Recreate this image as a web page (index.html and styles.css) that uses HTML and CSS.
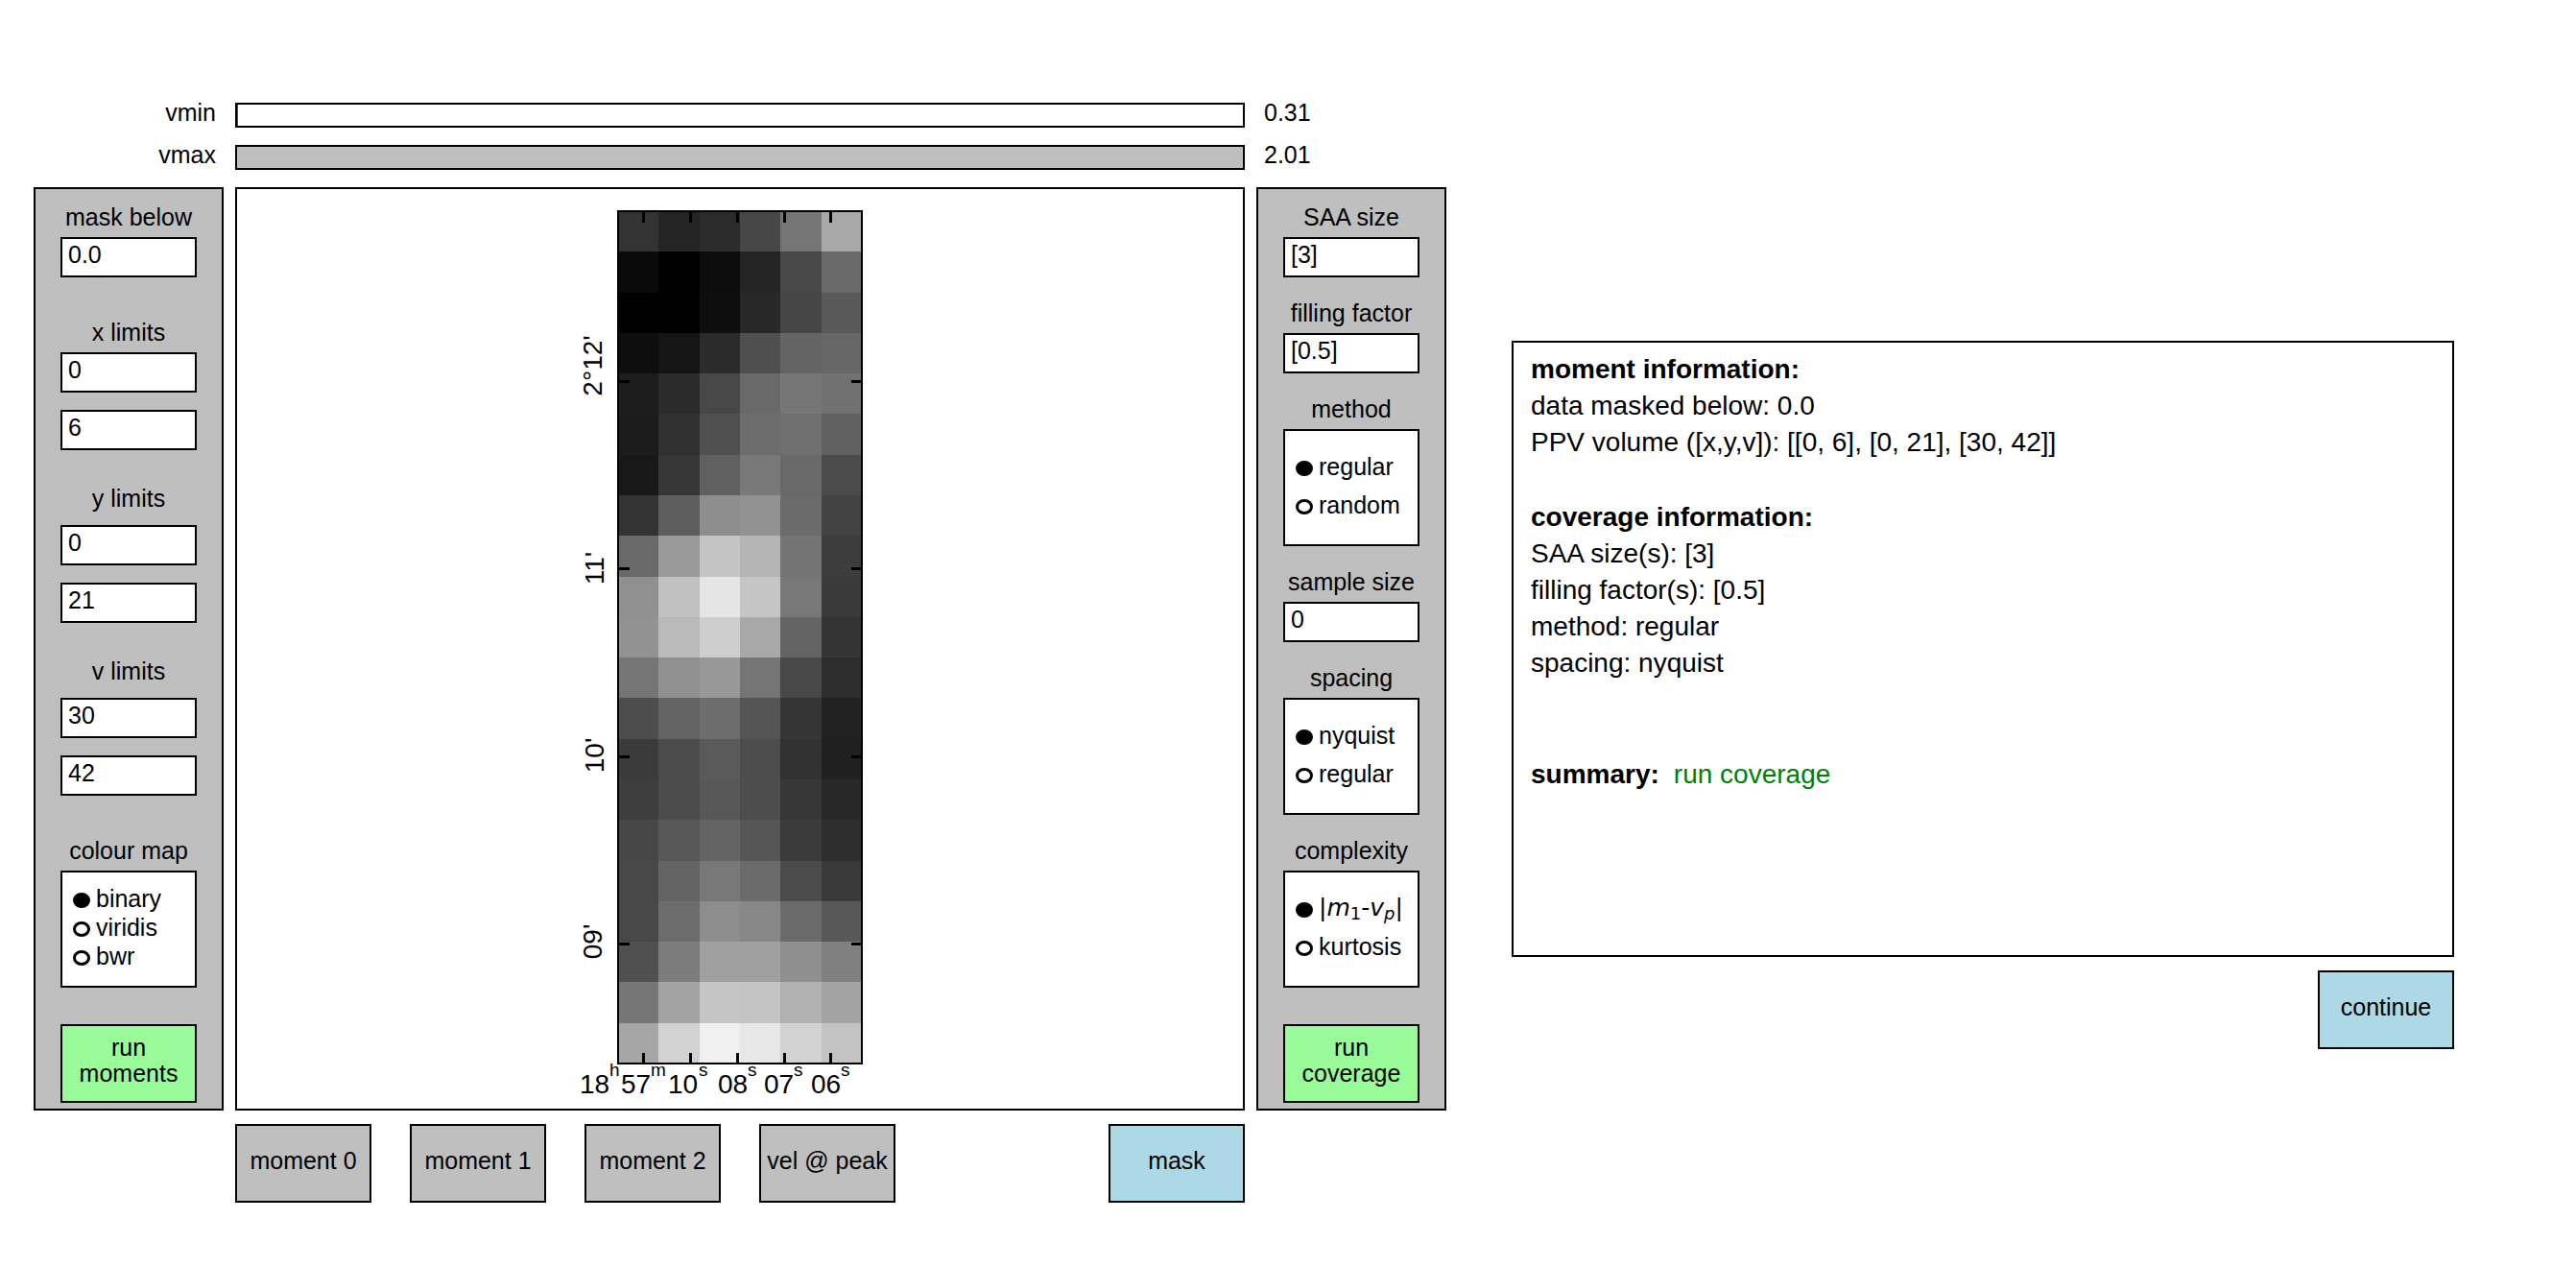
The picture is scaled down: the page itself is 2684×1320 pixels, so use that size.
FILE: index.html
```
<!DOCTYPE html>
<html lang="en">
<head>
<meta charset="utf-8">
<title>Moments and coverage</title>
<link rel="stylesheet" href="styles.css">
</head>
<body>
<main class="workspace">
  <label class="slider-label" for="vmin">vmin</label>
  <input class="slider slider-min" type="range" id="vmin" min="0.31" max="2.01" step="0.01" value="0.31">
  <output class="slider-value" for="vmin">0.31</output>

  <label class="slider-label" for="vmax">vmax</label>
  <input class="slider slider-max" type="range" id="vmax" min="0.31" max="2.01" step="0.01" value="2.01">
  <output class="slider-value" for="vmax">2.01</output>

  <form class="panel panel-moments">
    <div class="field">
      <label for="mask-below">mask below</label>
      <input class="entry" type="text" id="mask-below" value="0.0">
    </div>
    <div class="field">
      <label for="x-low">x limits</label>
      <div class="pair">
        <input class="entry" type="text" id="x-low" value="0">
        <input class="entry" type="text" aria-label="x upper limit" value="6">
      </div>
    </div>
    <div class="field field-raised">
      <label for="y-low">y limits</label>
      <div class="pair">
        <input class="entry" type="text" id="y-low" value="0">
        <input class="entry" type="text" aria-label="y upper limit" value="21">
      </div>
    </div>
    <div class="field field-raised">
      <label for="v-low">v limits</label>
      <div class="pair">
        <input class="entry" type="text" id="v-low" value="30">
        <input class="entry" type="text" aria-label="v upper limit" value="42">
      </div>
    </div>
    <div class="field">
      <span id="colour-map">colour map</span>
      <div class="choices choices-tight" role="radiogroup" aria-labelledby="colour-map">
        <label><input type="radio" name="cmap" checked><span>binary</span></label>
        <label><input type="radio" name="cmap"><span>viridis</span></label>
        <label><input type="radio" name="cmap"><span>bwr</span></label>
      </div>
    </div>
    <button class="button run" type="button">run<br>moments</button>
  </form>

  <section class="canvas">
    <svg class="plot" viewBox="0 0 400 958" role="img" aria-label="Moment map">
      <g id="pixels" shape-rendering="crispEdges"></g>
      <rect class="frame" x="73" y="23" width="254" height="888"/>
      <g id="ticks" shape-rendering="crispEdges"></g>
      <g class="axis axis-y">
        <text transform="translate(56 184) rotate(-90)">2°12'</text>
        <text transform="translate(58 395) rotate(-90)">11'</text>
        <text transform="translate(58 590) rotate(-90)">10'</text>
        <text transform="translate(56 784) rotate(-90)">09'</text>
      </g>
      <g class="axis">
        <text y="942"><tspan x="33">18</tspan><tspan x="76">57</tspan><tspan x="125">10</tspan></text>
        <text x="177" y="942">08</text>
        <text x="225" y="942">07</text>
        <text x="274" y="942">06</text>
      </g>
      <g class="axis-unit">
        <text x="64" y="924">h</text>
        <text x="107" y="924">m</text>
        <text x="157" y="924">s</text>
        <text x="208" y="924">s</text>
        <text x="256" y="924">s</text>
        <text x="305" y="924">s</text>
      </g>
    </svg>
  </section>

  <form class="panel panel-coverage">
    <div class="field">
      <label for="saa-size">SAA size</label>
      <input class="entry" type="text" id="saa-size" value="[3]">
    </div>
    <div class="field">
      <label for="filling">filling factor</label>
      <input class="entry" type="text" id="filling" value="[0.5]">
    </div>
    <div class="field">
      <span id="method">method</span>
      <div class="choices" role="radiogroup" aria-labelledby="method">
        <label><input type="radio" name="method" checked><span>regular</span></label>
        <label><input type="radio" name="method"><span>random</span></label>
      </div>
    </div>
    <div class="field">
      <label for="sample-size">sample size</label>
      <input class="entry" type="text" id="sample-size" value="0">
    </div>
    <div class="field">
      <span id="spacing">spacing</span>
      <div class="choices" role="radiogroup" aria-labelledby="spacing">
        <label><input type="radio" name="spacing" checked><span>nyquist</span></label>
        <label><input type="radio" name="spacing"><span>regular</span></label>
      </div>
    </div>
    <div class="field">
      <span id="complexity">complexity</span>
      <div class="choices" role="radiogroup" aria-labelledby="complexity">
        <label><input type="radio" name="complexity" checked><span class="math">|<i>m</i><sub>1</sub>-<i>v</i><sub><i>p</i></sub>|</span></label>
        <label><input type="radio" name="complexity"><span>kurtosis</span></label>
      </div>
    </div>
    <button class="button run" type="button">run<br>coverage</button>
  </form>

  <section class="report">
    <div class="info">
      <section>
        <h2>moment information:</h2>
        <p>data masked below: 0.0</p>
        <p>PPV volume ([x,y,v]): [[0, 6], [0, 21], [30, 42]]</p>
      </section>
      <section>
        <h2>coverage information:</h2>
        <p>SAA size(s): [3]</p>
        <p>filling factor(s): [0.5]</p>
        <p>method: regular</p>
        <p>spacing: nyquist</p>
      </section>
      <section class="summary">
        <h2>summary:</h2>
        <p>run coverage</p>
      </section>
    </div>
    <button class="button accent" type="button">continue</button>
  </section>

  <nav class="views">
    <button class="button" type="button">moment 0</button>
    <button class="button" type="button">moment 1</button>
    <button class="button" type="button">moment 2</button>
    <button class="button" type="button">vel @ peak</button>
    <button class="button accent mask" type="button">mask</button>
  </nav>
</main>
<script src="plot.js"></script>
</body>
</html>
```
FILE: styles.css
```
* {
  box-sizing: border-box;
}

body {
  margin: 0;
  background: #fff;
  color: #000;
  font: 25px/32px "Liberation Sans", Arial, sans-serif;
}

h2,
p {
  margin: 0;
}

input,
button {
  margin: 0;
  border-radius: 0;
  color: inherit;
  font: inherit;
}

.workspace {
  display: grid;
  grid-template-columns: 198px minmax(0, 1052fr) 198px minmax(0, 1038fr);
  column-gap: 12px;
  padding: 107px 127px 64px 35px;
}

/* colour-range sliders */

.slider-label,
.slider-value {
  line-height: 20px;
}

.slider-label {
  grid-column: 1;
  padding-right: 8px;
  text-align: right;
}

.slider {
  grid-column: 2;
  width: 100%;
  height: 26px;
  margin-bottom: 18px;
  border: 2px solid #000;
  appearance: none;
}

.slider-value {
  grid-column: 3;
  padding-left: 8px;
}

.slider-min {
  background: #fff;
}

.slider-max {
  background: #bfbfbf;
}

.slider::-webkit-slider-thumb {
  width: 1px;
  height: 22px;
  appearance: none;
}

.slider-min::-webkit-slider-thumb {
  background: #f00;
}

/* side panels */

.panel {
  display: flex;
  flex-direction: column;
  padding: 13px 26px 6px;
  border: 2px solid #000;
  background: #bfbfbf;
}

.panel-moments {
  grid-column: 1;
  gap: 41px;
}

.panel-coverage {
  gap: 21px;
}

.field {
  display: flex;
  flex-direction: column;
  gap: 5px;
  text-align: center;
  white-space: nowrap;
}

.field-raised {
  gap: 12px;
  margin-top: -7px;
}

.pair {
  display: flex;
  flex-direction: column;
  gap: 18px;
}

.entry {
  width: 100%;
  height: 42px;
  padding: 0 6px 6px;
  border: 2px solid #000;
  background: #fff;
}

.choices {
  display: flex;
  flex-direction: column;
  justify-content: center;
  height: 122px;
  padding: 0 11px;
  border: 2px solid #000;
  background: #fff;
}

.choices label {
  display: flex;
  align-items: center;
  gap: 6px;
  height: 40px;
}

.choices-tight label {
  height: 30px;
}

.choices span {
  padding-bottom: 4px;
}

.choices input {
  width: 18px;
  height: 16px;
  border: 3px solid #000;
  border-radius: 50%;
  background: #fff;
  appearance: none;
}

.choices input:checked {
  background: #000;
}

.math {
  font-family: "DejaVu Sans", sans-serif;
}

.math sub {
  font-size: 18px;
  line-height: 0;
  vertical-align: -4px;
}

/* buttons */

.button {
  width: 142px;
  height: 82px;
  padding: 0 0 6px;
  border: 2px solid #000;
  background: #bfbfbf;
  line-height: 27px;
  white-space: nowrap;
}

.run {
  margin-top: auto;
  background: #98fb98;
}

.panel-moments .run {
  margin-top: -3px;
}

.accent {
  background: #add8e6;
}

.views {
  grid-column: 2;
  display: flex;
  gap: 40px;
  margin-top: 14px;
}

.mask {
  margin-left: auto;
}

/* moment map */

.canvas {
  display: flex;
  justify-content: center;
  border: 2px solid #000;
}

.plot {
  width: 400px;
  height: 958px;
}

.frame {
  fill: none;
  stroke: #000;
  stroke-width: 2px;
}

.axis {
  font-size: 28px;
}

.axis-y {
  text-anchor: middle;
}

.axis-unit {
  font-size: 19px;
}

/* report */

.report {
  display: flex;
  flex-direction: column;
  align-items: flex-end;
  gap: 14px;
  margin: 160px 0 0 56px;
}

.info {
  width: 100%;
  min-height: 642px;
  padding: 9px 18px;
  border: 2px solid #000;
  font-size: 28px;
  line-height: 38px;
}

.info h2 {
  font-size: 28px;
}

.info section + section {
  margin-top: 40px;
}

.info .summary {
  display: flex;
  gap: 15px;
  margin-top: 78px;
}

.summary p {
  color: #008000;
}
```
FILE: plot.js
```
// Grey levels of the moment map, one string per row, two hex digits per pixel.
const rows = [
  "33242c4775a8", "0a010d244869", "01000e284559", "0e152b4f6467",
  "1d2b48697671", "1b30506d6f60", "18366079694b", "335e8e926b43",
  "6999c4b4743d", "90c1e5c5783a", "92bacea86434", "75909875482d",
  "4d636d553521", "3b4b5a4d3220", "3e4b574d3728", "475764563b2e",
  "4864786b4b3a", "486c8d876b58", "507ca09f8f80", "76a3c5c3b1a3",
  "a6d2f0e7d2c3"
];
const frame = { x: 73, y: 23, width: 254, height: 888 };

function addRect(parent, x, y, width, height, fill) {
  const rect = document.createElementNS("http://www.w3.org/2000/svg", "rect");
  const values = { x, y, width, height, fill };
  for (const name in values) rect.setAttribute(name, values[name]);
  parent.append(rect);
}

const pixels = document.getElementById("pixels");
rows.forEach((row, j) => {
  const top = Math.round(frame.y + j * frame.height / rows.length);
  const bottom = Math.round(frame.y + (j + 1) * frame.height / rows.length);
  row.match(/../g).forEach((level, i) => {
    const left = Math.round(frame.x + i * frame.width / 6);
    const right = Math.round(frame.x + (i + 1) * frame.width / 6);
    addRect(pixels, left, top, right - left, bottom - top, "#" + level.repeat(3));
  });
});

// Ticks point inwards from all four sides.
const ticks = document.getElementById("ticks");
for (const x of [98, 147, 196, 245, 293]) {
  addRect(ticks, x, 24, 3, 11, "#000");
  addRect(ticks, x, 900, 3, 11, "#000");
}
for (const y of [199, 394, 590, 785]) {
  addRect(ticks, 74, y, 11, 3, "#000");
  addRect(ticks, 316, y, 11, 3, "#000");
}
```
